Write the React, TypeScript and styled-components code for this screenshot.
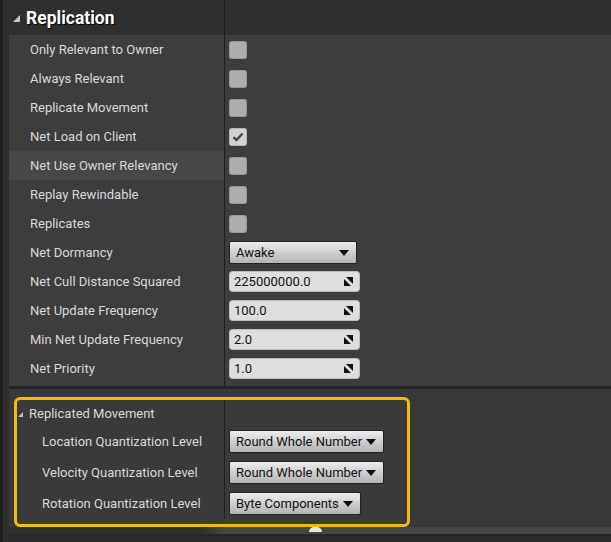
import React from "react";
import styled, { createGlobalStyle } from "styled-components";

const Global = createGlobalStyle`
  html, body { margin: 0; padding: 0; background: #2a2a2a; }
  body { font-family: Roboto, "Noto Sans", "Liberation Sans", sans-serif; }
  * { box-sizing: border-box; }
`;

const Page = styled.div`
  display: flex;
  width: 611px;
  height: 542px;
  overflow: hidden;
  background: #2a2a2a;
`;

const Gutter = styled.div`
  width: 9px;
  flex: none;
  background: #2e2e2e;
  border-left: 3px solid #1f1f1f;
`;

const Content = styled.div`
  flex: 1;
  display: flex;
  flex-direction: column;
  min-width: 0;
`;

const Section = styled.div`
  background: #3d3d3d;
  display: flex;
  flex-direction: column;
`;

const CategoryHeader = styled.div`
  height: 35px;
  display: grid;
  grid-template-columns: 216px 1fr;
  background: #2f2f2f;
`;

const HeaderCell = styled.div`
  display: flex;
  align-items: center;
  gap: 6px;
  padding-left: 4px;
  border-right: 1px solid #1c1c1c;
  color: #ffffff;
  font-weight: 700;
  font-size: 17.5px;
  text-shadow: 1px 1px 1px #000;
`;

const Triangle = styled.span<{ $size: number; $color: string }>`
  width: 0;
  height: 0;
  border-left: ${(p) => p.$size}px solid transparent;
  border-bottom: ${(p) => p.$size}px solid ${(p) => p.$color};
  margin-top: 2px;
`;

const Row = styled.div<{ $h: number }>`
  height: ${(p) => p.$h}px;
  display: grid;
  grid-template-columns: 216px 1fr;
`;

const LabelCell = styled.div<{ $indent: number; $hl?: boolean }>`
  display: flex;
  align-items: center;
  padding-left: ${(p) => p.$indent}px;
  border-right: 1px solid #1e1e1e;
  color: #d9d9d9;
  font-size: 13px;
  background: ${(p) => (p.$hl ? "#474747" : "transparent")};
  white-space: nowrap;
`;

const ValueCell = styled.div`
  display: flex;
  align-items: center;
  padding-left: 4px;
`;

const Checkbox = styled.div<{ $checked?: boolean }>`
  width: 18px;
  height: 18px;
  border-radius: 3px;
  background: ${(p) => (p.$checked ? "#d2d2d2" : "#aeaeae")};
  box-shadow: inset 0 0 0 1px rgba(0, 0, 0, 0.12);
  display: flex;
  align-items: center;
  justify-content: center;
`;

const Combo = styled.div<{ $min?: number }>`
  height: 23px;
  min-width: ${(p) => p.$min ?? 0}px;
  display: inline-flex;
  align-items: center;
  justify-content: space-between;
  gap: 4px;
  padding: 0 7px 0 6px;
  border: 1px solid #222;
  border-radius: 2px;
  background: linear-gradient(#ededed, #c9c9c9 60%, #b4b4b4);
  color: #111;
  font-size: 13px;
  white-space: nowrap;
`;

const Arrow = styled.span`
  width: 0;
  height: 0;
  border-left: 5px solid transparent;
  border-right: 5px solid transparent;
  border-top: 6px solid #111;
`;

const NumberBox = styled.div`
  width: 131px;
  height: 21px;
  display: flex;
  align-items: center;
  justify-content: space-between;
  padding: 0 7px 0 5px;
  border-radius: 4px;
  background: #dedede;
  box-shadow: inset 0 0 0 1px rgba(0, 0, 0, 0.15);
  color: #111;
  font-size: 13px;
`;

const Separator = styled.div`
  height: 3px;
  background: #262626;
`;

const Section2 = styled.div`
  background: #383838;
  padding: 8px 0 0 5px;
  display: flex;
  flex-direction: column;
`;

const Highlight = styled.div`
  width: 396px;
  border: 3px solid #f7b90b;
  border-radius: 6px;
  background: #3a3a3a;
  padding-bottom: 5px;
  display: flex;
  flex-direction: column;
`;

const SubHeaderCell = styled.div`
  display: flex;
  align-items: center;
  gap: 6px;
  padding-left: 1px;
  border-right: 1px solid #1e1e1e;
  color: #d9d9d9;
  font-size: 13px;
`;

const BoxRow = styled.div<{ $h: number }>`
  height: ${(p) => p.$h}px;
  display: grid;
  grid-template-columns: 208px 1fr;
`;

const Footer = styled.div`
  height: 7px;
  background: linear-gradient(90deg, #2e2e2e 0, #2e2e2e 190px, #454545 215px);
  margin-left: -5px;
  position: relative;
`;

const Handle = styled.span`
  position: absolute;
  left: 300px;
  top: 0;
  width: 13px;
  height: 5px;
  border-radius: 7px 7px 0 0;
  background: #e6e6e6;
`;

const DarkLine = styled.div`
  height: 3px;
  background: #262626;
  margin-left: -5px;
`;

const Tail = styled.div`
  flex: 1;
  background: #363636;
  margin-left: -2px;
`;

const CheckIcon = () => (
  <svg width="12" height="10" viewBox="0 0 12 10">
    <path d="M1.5 5.2 L4.5 8 L10.5 1.5" fill="none" stroke="#4a4a4a" strokeWidth="2.4" />
  </svg>
);

const SpinIcon = () => (
  <svg width="9" height="9" viewBox="0 0 9 9">
    <polygon points="2,0 9,0 9,7" fill="#111" />
    <polygon points="0,2 0,9 7,9" fill="#111" />
  </svg>
);

type Prop =
  | { label: string; kind: "check"; checked?: boolean; hl?: boolean }
  | { label: string; kind: "combo"; value: string }
  | { label: string; kind: "number"; value: string };

const props: Prop[] = [
  { label: "Only Relevant to Owner", kind: "check" },
  { label: "Always Relevant", kind: "check" },
  { label: "Replicate Movement", kind: "check" },
  { label: "Net Load on Client", kind: "check", checked: true },
  { label: "Net Use Owner Relevancy", kind: "check", hl: true },
  { label: "Replay Rewindable", kind: "check" },
  { label: "Replicates", kind: "check" },
  { label: "Net Dormancy", kind: "combo", value: "Awake" },
  { label: "Net Cull Distance Squared", kind: "number", value: "225000000.0" },
  { label: "Net Update Frequency", kind: "number", value: "100.0" },
  { label: "Min Net Update Frequency", kind: "number", value: "2.0" },
  { label: "Net Priority", kind: "number", value: "1.0" },
];

const movement = [
  { label: "Location Quantization Level", value: "Round Whole Number" },
  { label: "Velocity Quantization Level", value: "Round Whole Number" },
  { label: "Rotation Quantization Level", value: "Byte Components" },
];

export default function App() {
  return (
    <>
      <Global />
      <Page>
        <Gutter />
        <Content>
          <Section>
            <CategoryHeader>
              <HeaderCell>
                <Triangle $size={7} $color="#c8c8c8" />
                Replication
              </HeaderCell>
              <div />
            </CategoryHeader>
            {props.map((p) => (
              <Row key={p.label} $h={29}>
                <LabelCell $indent={21} $hl={p.kind === "check" && p.hl}>
                  {p.label}
                </LabelCell>
                <ValueCell>
                  {p.kind === "check" && (
                    <Checkbox $checked={p.checked}>{p.checked && <CheckIcon />}</Checkbox>
                  )}
                  {p.kind === "combo" && (
                    <Combo $min={128}>
                      {p.value}
                      <Arrow />
                    </Combo>
                  )}
                  {p.kind === "number" && (
                    <NumberBox>
                      {p.value}
                      <SpinIcon />
                    </NumberBox>
                  )}
                </ValueCell>
              </Row>
            ))}
            <Row $h={3}>
              <LabelCell $indent={0} />
              <div />
            </Row>
          </Section>
          <Separator />
          <Section2>
            <Highlight>
              <BoxRow $h={26}>
                <SubHeaderCell>
                  <Triangle $size={5} $color="#bdbdbd" />
                  Replicated Movement
                </SubHeaderCell>
                <div />
              </BoxRow>
              {movement.map((m) => (
                <BoxRow key={m.label} $h={31}>
                  <LabelCell $indent={25}>{m.label}</LabelCell>
                  <ValueCell>
                    <Combo>
                      {m.value}
                      <Arrow />
                    </Combo>
                  </ValueCell>
                </BoxRow>
              ))}
            </Highlight>
            <Footer>
              <Handle />
            </Footer>
            <DarkLine />
            <Tail />
          </Section2>
        </Content>
      </Page>
    </>
  );
}
